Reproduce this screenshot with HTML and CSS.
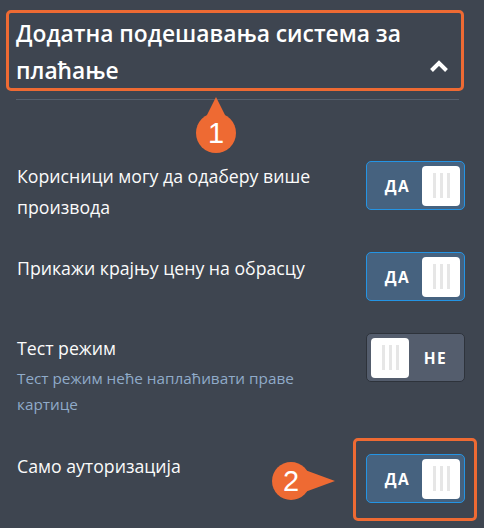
FILE: index.html
```html
<!DOCTYPE html>
<html lang="sr">
<head>
<meta charset="utf-8">
<link rel="stylesheet" href="styles.css">
</head>
<body>
<div class="panel">
  <div class="header highlight">
    <h2 class="title">Додатна подешавања система за плаћање</h2>
    <svg class="chevron" width="20" height="14" viewBox="0 0 20 14"><path d="M2.5 11.5 L10 4 L17.5 11.5" fill="none" stroke="#fff" stroke-width="4" stroke-linejoin="miter"/></svg>
  </div>
  <div class="divider"></div>

  <div class="marker marker-up"><span>1</span></div>

  <div class="row row-1">
    <div class="label">Корисници могу да одаберу више производа</div>
    <div class="toggle on"><span class="txt">ДА</span><span class="knob"><i></i><i></i><i></i></span></div>
  </div>

  <div class="row row-2">
    <div class="label">Прикажи крајњу цену на обрасцу</div>
    <div class="toggle on"><span class="txt">ДА</span><span class="knob"><i></i><i></i><i></i></span></div>
  </div>

  <div class="row row-3">
    <div class="label">Тест режим
      <div class="help">Тест режим неће наплаћивати праве картице</div>
    </div>
    <div class="toggle off"><span class="knob"><i></i><i></i><i></i></span><span class="txt">НЕ</span></div>
  </div>

  <div class="row row-4">
    <div class="label">Само ауторизација</div>
    <div class="toggle-wrap highlight">
      <div class="toggle on"><span class="txt">ДА</span><span class="knob"><i></i><i></i><i></i></span></div>
      <div class="marker marker-right"><span>2</span></div>
    </div>
  </div>
</div>
</body>
</html>
```

FILE: styles.css
```css
* { box-sizing: border-box; }
html, body { margin: 0; padding: 0; }
body {
  background: #3e4550;
  font-family: "Open Sans", "Noto Sans", sans-serif;
  color: #fff;
  width: 484px;
  height: 528px;
  overflow: hidden;
}
.panel {
  position: relative;
  padding: 10px 0 0 6px;
}
.highlight {
  border: 3px solid #ee6a33;
  border-radius: 5px;
}
.header {
  width: 458px;
  height: 81px;
  display: flex;
  align-items: flex-end;
  justify-content: space-between;
  padding: 2px 12px 13px 7px;
}
.title {
  margin: 0;
  font-size: 22.8px;
  font-weight: 600;
  line-height: 37px;
  width: 405px;
  align-self: flex-start;
}
.chevron { display: block; margin-bottom: 2px; }
.divider {
  height: 1px;
  background: #56606d;
  margin: 8px 25px 0 10px;
}
.marker {
  position: absolute;
  width: 40px;
  height: 40px;
  background: #ee6a33;
  border-radius: 50%;
  display: flex;
  align-items: center;
  justify-content: center;
  font-family: "Liberation Sans", Arial, sans-serif;
  font-size: 29px;
  color: #fff;
}
.marker::before {
  content: "";
  position: absolute;
  border: 0 solid transparent;
}
.marker span { position: relative; }
.marker-up { left: 196px; top: 113px; }
.marker-up::before {
  left: 9px;
  top: -16px;
  border-width: 0 11px 22px 11px;
  border-bottom-color: #ee6a33;
}
.marker-right { left: -84px; top: 21px; width: 38px; height: 38px; }
.marker-right::before {
  right: -25px;
  top: 8px;
  border-width: 11px 0 11px 30px;
  border-left-color: #ee6a33;
}
.row {
  display: flex;
  justify-content: space-between;
  align-items: flex-start;
  padding-left: 11px;
  padding-right: 19px;
}
.label {
  font-size: 17.7px;
  line-height: 31px;
  width: 320px;
  color: #fbfbfb;
}
.help {
  font-size: 15.3px;
  line-height: 26px;
  color: #90abc9;
  margin-top: 1px;
}
.row-1 { margin-top: 61px; }
.row-2 { margin-top: 29px; }
.row-2 .label { margin-top: 1px; }
.row-3 { margin-top: 32px; }
.row-4 { margin-top: 21px; padding-right: 7px; }
.row-4 .label { margin-top: 13px; }
.toggle-wrap {
  position: relative;
  width: 124px;
  height: 83px;
  padding: 13px 0 0 10px;
}
.toggle {
  width: 99px;
  height: 49px;
  border-radius: 5px;
  display: flex;
  align-items: center;
  padding: 0 4px;
  font-size: 15.5px;
  font-weight: 700;
  letter-spacing: 1.5px;
}
.toggle.on {
  background: #46627f;
  border: 1px solid #2494e4;
}
.toggle.off {
  background: #545d6d;
  border: 1px solid #2e333b;
}
.toggle .txt { flex: 1; text-align: center; }
.toggle.on .txt { padding-left: 2px; }
.toggle.off .txt { padding-left: 2px; }
.knob {
  width: 38px;
  height: 40px;
  background: #fff;
  border-radius: 4px;
  display: flex;
  justify-content: center;
  align-items: center;
  gap: 4px;
}
.knob i {
  display: block;
  width: 3px;
  height: 25px;
  background: #e6e6e6;
}
```
